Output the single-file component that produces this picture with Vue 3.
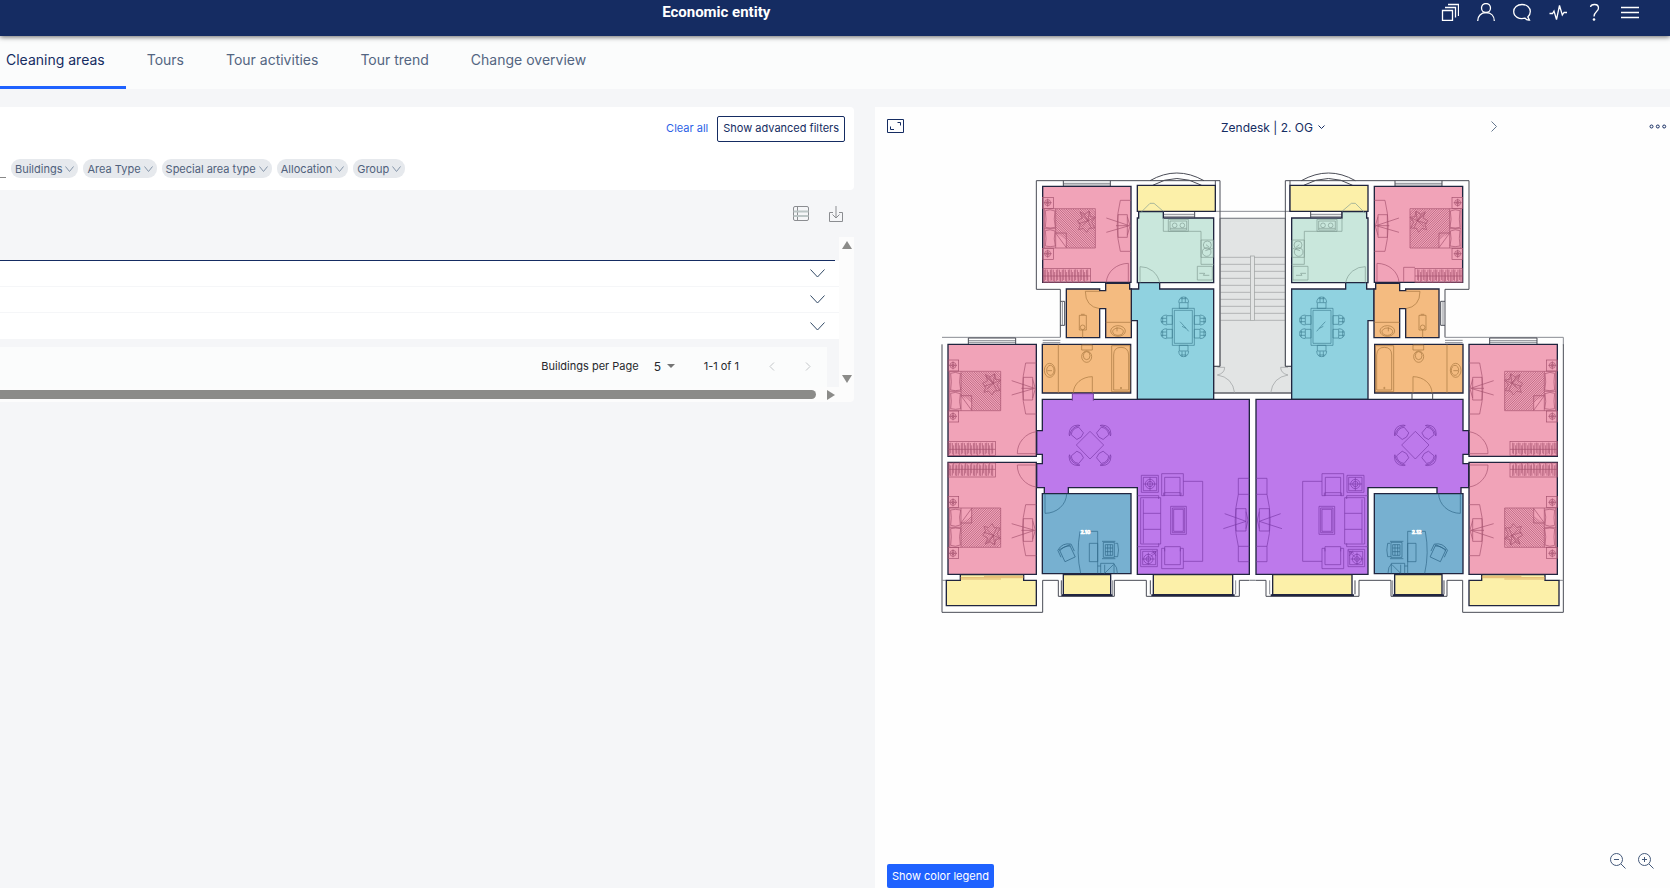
<script setup>
import { ref } from 'vue'

const tabs = ['Cleaning areas', 'Tours', 'Tour activities', 'Tour trend', 'Change overview']
const activeTab = ref(0)
const filters = ['Buildings', 'Area Type', 'Special area type', 'Allocation', 'Group']
const rows = [1, 2, 3]
const pageSize = ref('5')
const search = ref('')

const bars = Array.from({ length: 15 }, (_, i) => 4 + i * 9)
const treads = Array.from({ length: 10 }, (_, i) => 292 + i * 21)
const hatch = Array.from({ length: 32 }, (_, i) => 377 - 110 + i * 7)
const diningChairs = [
  'translate(761 445)',
  'translate(761 556) rotate(180)',
  'translate(727 480) rotate(-90)',
  'translate(727 521) rotate(-90)',
  'translate(793 480) rotate(90)',
  'translate(793 521) rotate(90)'
]
const loungeChairs = [
  'translate(442 820) rotate(-45)',
  'translate(518 820) rotate(45)',
  'translate(442 892) rotate(-135)',
  'translate(518 892) rotate(135)'
]
</script>

<template>
  <div class="page">
    <header class="topbar">
      <h1>Economic entity</h1>
      <nav class="tools" aria-label="Tools">
        <button aria-label="Windows">
          <svg viewBox="0 0 18 18"><path d="M1.5 7.5h10v10h-10zM4 4.5h10.500v10M7 1.500h10.500v11.500" /></svg>
        </button>
        <button aria-label="Account">
          <svg viewBox="0 0 18 18"><circle cx="9" cy="5" r="4.500" /><path d="M.7 18c0-5 3.300-8.300 8.300-8.300s8.300 3.300 8.300 8.300" /></svg>
        </button>
        <button aria-label="Messages">
          <svg viewBox="0 0 18 18"><path d="M12 15.200c-6 1.600-11.300-1.600-11.300-6.600C.7 4.300 4.300 1.500 9 1.500s8.300 2.800 8.300 7.100c0 2.300-.9 4-2.500 5.300l1.700 3.200c-2 .2-3.500-.5-4.500-1.900z" /></svg>
        </button>
        <button aria-label="Activity">
          <svg viewBox="0 0 18 18"><path d="M.5 10.500h3l1.500-2.500 2.500 8.500L10.500 2.500l2.800 9.500 1.700-2.500h3" /></svg>
        </button>
        <button aria-label="Help">
          <svg viewBox="0 0 18 18"><path d="M5.500 4C6 .8 13.500.2 13.500 5c0 3.500-4.500 3.500-4.500 8.500" /><circle class="solid" cx="9" cy="16.500" r="1.300" /></svg>
        </button>
        <button aria-label="Menu">
          <svg viewBox="0 0 18 18"><path d="M0 4.500h18M0 9.500h18M0 14.500h18" /></svg>
        </button>
      </nav>
    </header>

    <nav class="tabs" aria-label="Sections">
      <a
        v-for="(tab, i) in tabs"
        :key="tab"
        href="#"
        :class="{ active: i === activeTab }"
        @click.prevent="activeTab = i"
      >{{ tab }}</a>
    </nav>

    <main>
      <section class="list">
        <div class="filters">
          <div class="actions">
            <button class="clear">Clear all</button>
            <button class="advanced">Show advanced filters</button>
          </div>
          <div class="chips">
            <input v-model="search" type="text" aria-label="Search" />
            <button v-for="name in filters" :key="name" class="chip">
              {{ name }}
              <svg viewBox="0 0 9 6"><path d="M.5.5l4 5 4-5" /></svg>
            </button>
          </div>
        </div>

        <div class="exports">
          <button aria-label="Columns">
            <svg viewBox="0 0 16 16"><rect x=".5" y=".5" width="15" height="14" rx="1.500" /><path d="M4.500.5v14" /><path class="soft" d="M.5 5.500h15M.5 10h15" /></svg>
          </button>
          <button aria-label="Download">
            <svg viewBox="0 0 16 16"><path d="M5 6.500H1.500v9h13v-9H11M8 0v11.500M4.500 8.500L8 12l3.500-3.500" /></svg>
          </button>
        </div>

        <div class="scroller">
          <div class="viewport">
            <div class="heading"></div>
            <table>
              <tbody>
                <tr v-for="row in rows" :key="row">
                  <td>
                    <button aria-label="Expand">
                      <svg viewBox="0 0 15 9"><path d="M.5.5l7 7.500 7-7.500" /></svg>
                    </button>
                  </td>
                </tr>
              </tbody>
            </table>
            <div class="pager">
              <label for="size">Buildings per Page</label>
              <span class="size">
                <select id="size" v-model="pageSize">
                  <option>5</option>
                  <option>10</option>
                </select>
                <svg viewBox="0 0 8 4"><path d="M0 0h8L4 4z" /></svg>
              </span>
              <span class="range">1-1 of 1</span>
              <button aria-label="Previous"><svg viewBox="0 0 6 9"><path d="M5 .5l-4 4 4 4" /></svg></button>
              <button aria-label="Next"><svg viewBox="0 0 6 9"><path d="M1 .5l4 4-4 4" /></svg></button>
            </div>
          </div>
          <div class="vbar">
            <svg viewBox="0 0 10 8"><path d="M5 0l5 8H0z" /></svg>
            <svg viewBox="0 0 10 8"><path d="M0 0h10L5 8z" /></svg>
          </div>
          <div class="hbar">
            <span></span>
            <svg viewBox="0 0 8 10"><path d="M0 0l8 5-8 5z" /></svg>
          </div>
        </div>
      </section>

      <section class="plan">
        <div class="planhead">
          <button class="expand" aria-label="Full screen">
            <svg viewBox="0 0 17 14"><path d="M.5.5h16v13H.5z" /><path d="M3.500 7.500v3h3.500M10.500 3.500h3v3" /></svg>
          </button>
          <button class="floor">
            Zendesk | 2. OG
            <svg viewBox="0 0 7 5"><path d="M.5.5l3 3 3-3" /></svg>
          </button>
          <button class="next" aria-label="Next floor">
            <svg viewBox="0 0 6 11"><path d="M.5.5l5 5-5 5" /></svg>
          </button>
          <button class="more" aria-label="More">
            <svg viewBox="0 0 18 5"><circle cx="2.500" cy="2.500" r="1.500" /><circle cx="8.800" cy="2.500" r="1.500" /><circle cx="15.200" cy="2.500" r="1.500" /></svg>
          </button>
        </div>

        <svg class="drawing" viewBox="0 0 1950 1410" role="img" aria-label="Floor plan">
          <defs>
            <g id="stand">
              <rect width="32" height="33" /><circle cx="15" cy="16" r="9" /><path d="M15 4v24M3 16h24" /><circle cx="15" cy="16" r="4" />
            </g>
            <clipPath id="cover"><path d="M377 147H496V263H409V240L377 218Z" /></clipPath>
            <g id="bed">
              <use href="#stand" x="338" y="112" />
              <use href="#stand" x="338" y="265" />
              <path d="M343 146H496V264H343ZM377 146V264M343 206H377M346 152Q360 146 375 153Q370 178 376 202Q360 206 346 202Q350 178 346 152M346 212Q360 206 375 213Q370 238 376 258Q360 262 346 258Q350 236 346 212M377 219H409V263M377 219L409 263" />
              <g clip-path="url(#cover)"><path v-for="x in hatch" :key="x" :d="`M${x} 146l118 118`" /></g>
              <path d="M450 155l14 8 14-10 3 17 15 2-11 14 9 18-17 1-7 12-10-12-14 4 5-15-9-12 15-8zM452 160l22 22 18-8M474 182l-20 18M474 182l10 22M462 163l12 19 4-28M446 191l28-9" />
              <path d="M603 121H571Q552 198 571 274H603M564 164H592V232H564ZM592 170l8 28-8 28M529 174L598 197L529 217M558 197h34" />
            </g>
            <g id="rack">
              <rect width="142" height="42" /><path d="M0 23H142" />
              <path v-for="(x, i) in bars" :key="x" :d="`M${x} 4l${i % 3} 34M${x + 4} ${3 + (i % 2) * 8}v32`" />
            </g>
            <g id="chair"><path d="M-13 0V-17H13V0ZM-15 -17Q-14 -34 0 -34T15 -17M-9 -29H9M-5 -34V-18M5 -34V-18" /></g>
            <g id="seat"><path d="M-16 -10Q0 -22 16 -10L14 12Q0 20 -14 12ZM-19 -16Q0 -34 19 -16L22 -11Q0 -28 -22 -11Z" /></g>
            <g id="suite">
              <use href="#bed" x="-284" y="488" />
              <use href="#rack" x="54" y="845" />
              <path d="M319 881H262A66 66 0 0 1 319 815" />
            </g>
            <g id="half">
              <g class="wall">
                <path d="M870 62H319V388H391V532M338 1261V1357H36V553M870 62V619H851M856 62V154M338 1261H385V1309H553V1261H649V1309H928V1261H958M394 1261V1303M661 1261V1303M391 424H404V496H391" />
                <path class="faint" d="M36 532H391M36 1261H49M958 1261H976M548 1261V1303M917 1261V1303M397 424V496M338 541H391M338 548H391M400 70H541M400 75H541M115 542H257M115 547H257M700 163H794M700 169H794" />
                <path d="M400 62V78M541 62V78M115 534V552M257 534V552M115 534H257M700 155V173M794 155V173" />
                <path d="M660 62Q740 16 822 62M668 76Q740 35 815 76" />
              </g>
              <g class="room">
                <path class="pink" d="M338 79H603V367H338Z" />
                <path class="pink" d="M54 553H319V889H54Z" />
                <path class="pink" d="M54 907H319V1243H54Z" />
                <path class="yellow" d="M622 76H856V154H622Z" />
                <path class="mint" d="M626 155H700V174H851V368H622V174H626Z" />
                <path class="blue" d="M626 368H689V387H851V718H622V482H604V387H626Z" />
                <path class="orange" d="M409 387H509V392H527V370H599V387H604V533H527V446H509V533H409Z" />
                <path class="orange" d="M337 553H602V699H337Z" />
                <path class="purple" d="M337 718H958V1243H622V983H415V1001H343V983H320V911H337V883H320V812H337Z" />
                <path class="steel" d="M337 1001H603V1241H337Z" />
                <path class="yellow" d="M49 1261H91V1244H281V1261H319V1337H49Z" />
                <path class="yellow" d="M400 1244H542V1304H400Z" />
                <path class="yellow" d="M670 1244H908V1304H670Z" />
                <path class="thick" d="M394 1306H548M664 1306H914" />
              </g>

              <g class="ink rose">
                <use href="#bed" />
                <use href="#rack" x="339" y="325" />
                <path d="M595 367V310A67 60 0 0 0 529 367" />
                <use href="#suite" />
                <use href="#suite" transform="translate(0 1796) scale(1 -1)" />
              </g>
              <g class="ink moss">
                <path d="M700 174V214H813V313H851M715 178H775V214H715ZM720 183H770V210H720ZM720 205H770M813 240H850V292H813ZM802 319H847V360H802ZM808 340H824L820 346H838M630 368V320A59 60 0 0 1 689 368M630 160L660 130H672L700 154" />
                <circle cx="734" cy="196" r="7" /><circle cx="757" cy="196" r="7" />
                <circle cx="832" cy="255" r="12" /><circle cx="830" cy="276" r="13" /><path d="M848 265L826 272M838 262l-10-8" />
              </g>
              <g class="ink sea">
                <path d="M727 445H793V556H727ZM733 451H787V550H733ZM750 485L764 500L776 514M756 499L768 505" />
                <use v-for="t in diningChairs" :key="t" href="#chair" :transform="t" />
              </g>
              <g class="ink rust">
                <path d="M527 487H604M385 553V699M455 555H487V570H455ZM545 557H600V695H545ZM551 690V585Q551 562 573 562T596 585V690ZM487 699V650A57 49 0 0 0 430 699M466 394H509M466 394Q466 440 509 446M448 466H469V510H448ZM458 510V533M453 463H464M561 502V514M352 632H366" />
                <circle cx="458" cy="502" r="7" /><circle cx="573" cy="684" r="2" /><ellipse cx="564" cy="513" rx="22" ry="16" /><ellipse cx="564" cy="515" rx="16" ry="11" /><ellipse cx="359" cy="631" rx="16" ry="21" /><ellipse cx="361" cy="631" rx="11" ry="15" /><ellipse cx="470" cy="590" rx="15" ry="17" /><ellipse cx="470" cy="587" rx="10" ry="12" />
              </g>
              <g class="ink plum">
                <path d="M480 814L521 855L480 897L439 855Z" />
                <use v-for="t in loungeChairs" :key="t" href="#seat" :transform="t" />
                <path d="M634 946H685V997H634ZM640 952H680V992H640ZM695 941H760V1007H750V998H704V1007H695ZM704 1000V952H750V1000M701 998V1006H753V998M760 964H818V1204H760M722 1039H769V1123H722ZM727 1044H764V1118H727ZM731 1048H760V1114H731Z" />
                <path d="M632 1013H692V1152H632ZM640 1018V1150M640 1060H692M640 1108H692M622 1007H686V1017M622 1160H686V1150M632 1168H682V1220H632ZM638 1174H677V1214H638ZM695 1226V1165H704V1214H751V1165H760V1226ZM704 1174V1160H751V1174" />
                <circle cx="660" cy="972" r="14" /><circle cx="660" cy="972" r="8" /><circle cx="655" cy="1197" r="14" /><circle cx="655" cy="1197" r="7" /><path d="M660 952V992M640 972H680M636 1197H674M655 1178V1214M664 1180l18-8M668 1172l10 16M662 1190l16-14" />
                <path d="M958 955H925V1003Q906 1082 925 1159V1205H958M925 1003H958M925 1159H958M918 1046H948V1113H918ZM948 1055l6 25-6 26M884 1061L948 1084L880 1106" />
              </g>
              <g class="ink teal">
                <path d="M345 1001V1060A65 60 0 0 0 410 1001M503 1240V1114H450Q438 1180 452 1240M478 1150H503V1205H478ZM520 1147H553V1192H520ZM516 1144H556M516 1196H556M556 1150H563Q568 1170 563 1190H553M526 1154H548V1186H526ZM533 1154V1186M541 1154V1186M526 1164H548M526 1175H548M512 1240V1210H552V1240M552 1212Q562 1220 562 1240M524 1240L550 1214M524 1214V1240M503 1218H512" />
                <g transform="translate(411 1178) rotate(-25)"><path d="M-17 -18H17V22H-17ZM-22 5V-18Q0 -34 22 -18V5M-17 -14Q0 -24 17 -14" /></g>
              </g>
              <path class="ink amber" d="M91 1257H213M162 1249H281M91 1253H281" />
            </g>
          </defs>

          <path class="hall" d="M870 175H1066V619H1085V699H851V619H870Z" />
          <g class="wall">
            <path class="faint" d="M856 154H1080M870 175H1066M1900 532V556" />
            <path d="M851 699H1085" />
          </g>
          <g class="ink stair">
            <path v-for="y in treads" :key="y" :d="`M870 ${y}H961M973 ${y}H1066`" />
            <rect x="961" y="288" width="12" height="193" />
            <path d="M862 622H884Q884 640 862 645Q908 652 914 699M1074 622H1052Q1052 640 1074 645Q1028 652 1022 699" />
          </g>
          <use href="#half" />
          <use href="#half" transform="translate(1936 0) scale(-1 1)" />
          <path class="notch" d="M427 722V701H490V722" />
          <path class="wall" d="M1446 701V718M1508 701V718" />
          <path class="ink rose" d="M1421 367V322H1455" />
          <text x="466" y="1122">2.10</text>
          <text x="1460" y="1122">2.12</text>
        </svg>

        <div class="planfoot">
          <button class="legend">Show color legend</button>
          <span class="zooms">
            <button aria-label="Zoom out">
              <svg viewBox="0 0 16 16"><circle cx="6.500" cy="6.500" r="6" /><path d="M11 11l4.500 4.500M4 6.500h5" /></svg>
            </button>
            <button aria-label="Zoom in">
              <svg viewBox="0 0 16 16"><circle cx="6.500" cy="6.500" r="6" /><path d="M11 11l4.500 4.500M4 6.500h5M6.500 4v5" /></svg>
            </button>
          </span>
        </div>
      </section>
    </main>
  </div>
</template>

<style>
body {
  margin: 0;
  background: #f5f6f8;
}
</style>

<style scoped>
.page {
  display: flex;
  flex-direction: column;
  min-height: 100vh;
  font-family: Inter, "Liberation Sans", sans-serif;
  font-size: 11px;
  color: #152c62;
}
button {
  margin: 0;
  padding: 0;
  border: 0;
  background: none;
  font: inherit;
  color: inherit;
  cursor: pointer;
}
svg {
  display: block;
  fill: none;
  stroke: currentColor;
}
.topbar {
  position: relative;
  display: flex;
  align-items: center;
  justify-content: space-between;
  height: 24px;
  padding: 0 31px 12px 39.65%;
  background: #152c62;
  color: #fff;
  box-shadow: 0 1px 5px rgba(0, 0, 0, 0.6);
}
.topbar h1 {
  margin: 0;
  font: 700 15px/24px Roboto, sans-serif;
}
.tools {
  display: flex;
  gap: 18px;
}
.tools svg {
  width: 18px;
  height: 18px;
  stroke-width: 1.3;
}
.solid {
  fill: #fff;
  stroke: none;
}
.tabs {
  display: flex;
  height: 53px;
  background: #fbfcfc;
}
.tabs a {
  box-sizing: border-box;
  padding: 12px 21px 0;
  border-bottom: 3px solid transparent;
  color: #536581;
  font-size: 14px;
  line-height: 24px;
  text-decoration: none;
}
.tabs a:first-child {
  padding-left: 6px;
}
.tabs a.active {
  border-color: #1f62ff;
  color: #152c62;
}
main {
  flex: 1;
  display: grid;
  grid-template-columns: 854fr 795fr;
  gap: 21px;
  padding-top: 18px;
}
.filters {
  height: 83px;
  border-radius: 0 4px 4px 0;
  background: #fff;
}
.actions {
  display: flex;
  justify-content: flex-end;
  gap: 9px;
  padding: 9px 9px 0 0;
}
.clear {
  padding-bottom: 2px;
  color: #2b62e6;
}
.advanced {
  height: 26px;
  padding: 0 5px 2px;
  border: 1px solid #152c62;
  border-radius: 2px;
}
.chips {
  display: flex;
  gap: 5px;
  padding-top: 17px;
}
.chips input {
  width: 6px;
  height: 18px;
  padding: 0;
  border: 0;
  border-bottom: 1px solid #888;
  outline: 0;
  background: none;
}
.chip {
  display: flex;
  align-items: center;
  gap: 3px;
  height: 19px;
  padding: 0 4px;
  border-radius: 9px;
  background: #e6e9ed;
  color: #50617c;
}
.chip svg {
  width: 9px;
  height: 6px;
  stroke: #8494a8;
}
.exports {
  display: flex;
  justify-content: flex-end;
  align-items: flex-start;
  gap: 19px;
  height: 31px;
  padding: 16px 10px 0 0;
  color: #8b8d91;
}
.exports svg {
  width: 16px;
  height: 16px;
}
.soft {
  stroke: #bcc6c6;
  stroke-width: 2;
}
.scroller {
  display: grid;
  grid-template-columns: 1fr 15px;
  grid-template-rows: auto 15px;
  border-radius: 0 0 4px 0;
  overflow: hidden;
}
.heading {
  height: 23px;
  margin-right: 4px;
  border-bottom: 1px solid #152c62;
}
table {
  width: 100%;
  border-collapse: separate;
  border-spacing: 0;
}
td {
  height: 25px;
  padding: 0 14px 0 0;
  border-bottom: 1px solid #f5f6f8;
  background: #fff;
  text-align: right;
  line-height: 0;
}
tr:last-child td {
  height: 26px;
  border-bottom: 0;
}
td svg {
  width: 15px;
  height: 9px;
  color: #334a66;
}
.pager {
  display: flex;
  align-items: center;
  height: 40px;
  margin: 8px 12px 0 0;
  padding: 0 16px 2px 0;
  box-sizing: border-box;
  justify-content: flex-end;
  background: #fbfcfc;
  color: #26282c;
}
.size {
  display: flex;
  align-items: center;
  gap: 4px;
  margin: 0 29px 0 15px;
}
.size select {
  appearance: none;
  width: 9px;
  padding: 0;
  border: 0;
  background: none;
  font: 12px Inter, sans-serif;
  color: inherit;
}
.size svg {
  width: 8px;
  height: 4px;
  fill: #747474;
  stroke: none;
}
.pager button {
  margin-left: 30px;
  color: #c2c5c8;
}
.pager button svg {
  width: 6px;
  height: 9px;
}
.vbar {
  display: flex;
  flex-direction: column;
  align-items: center;
  justify-content: space-between;
  padding: 4px 0;
  background: #fcfcfc;
}
.vbar svg {
  width: 10px;
  height: 8px;
  fill: #8b8b89;
  stroke: none;
}
.hbar {
  grid-column: 1 / -1;
  display: flex;
  align-items: center;
  gap: 11px;
  padding-right: 19px;
  background: #fcfcfc;
}
.hbar span {
  flex: 1;
  height: 9px;
  border-radius: 0 5px 5px 0;
  background: #8b8b89;
}
.hbar svg {
  width: 8px;
  height: 10px;
  fill: #8b8b89;
  stroke: none;
}
.plan {
  display: flex;
  flex-direction: column;
  background: #fefefe;
}
.planhead {
  display: grid;
  grid-template-columns: 334fr 270fr 158fr 18px;
  align-items: center;
  height: 38px;
  padding: 0 3px 15px 12px;
}
.expand {
  width: 17px;
}
.expand svg {
  width: 17px;
  height: 14px;
}
.floor {
  display: flex;
  align-items: center;
  gap: 5px;
  padding-top: 2px;
  font-size: 12px;
}
.floor svg {
  width: 7px;
  height: 5px;
}
.next {
  width: 6px;
}
.next svg {
  width: 6px;
  height: 11px;
  stroke: #66788f;
}
.more svg {
  width: 18px;
  height: 5px;
}
.drawing {
  margin: 0 90px 0 55px;
  stroke-width: 3;
}
.wall {
  stroke: #4a4c56;
  stroke-width: 3;
}
.faint {
  stroke: #8a8c93;
}
.room {
  stroke: #20253f;
  stroke-width: 4;
}
.pink { fill: #f1a3b8; }
.yellow { fill: #fcf0a9; }
.mint { fill: #c9e7dc; }
.blue { fill: #90d2e0; }
.orange { fill: #f4bb80; }
.purple { fill: #bd79eb; }
.steel { fill: #77b0d0; }
.hall {
  fill: #e2e4e4;
  stroke: #85878a;
}
.thick {
  stroke-width: 6;
}
.notch {
  fill: #bd79eb;
  stroke: #6e3b94;
}
.ink {
  stroke-width: 2;
}
.rose { stroke: #a4516e; }
.moss { stroke: #809b93; }
.sea { stroke: #3e7e92; }
.rust { stroke: #a6763e; }
.plum { stroke: #7a3aa8; }
.teal { stroke: #2f6688; }
.amber { stroke: #d79a50; }
.stair {
  stroke: #999c9d;
}
.drawing text {
  fill: #fff;
  stroke: #fff;
  stroke-width: 2;
  font-size: 15px;
  font-weight: 700;
  text-anchor: middle;
}
.planfoot {
  display: flex;
  align-items: flex-end;
  justify-content: space-between;
  margin-top: auto;
  padding: 0 16px 0 12px;
}
.legend {
  height: 24px;
  padding: 0 5px 1px;
  border-radius: 2px;
  background: #1f62ff;
  color: #fff;
}
.zooms {
  display: flex;
  gap: 12px;
  padding-bottom: 19px;
}
.zooms svg {
  width: 16px;
  height: 16px;
  stroke: #44597a;
}
</style>
